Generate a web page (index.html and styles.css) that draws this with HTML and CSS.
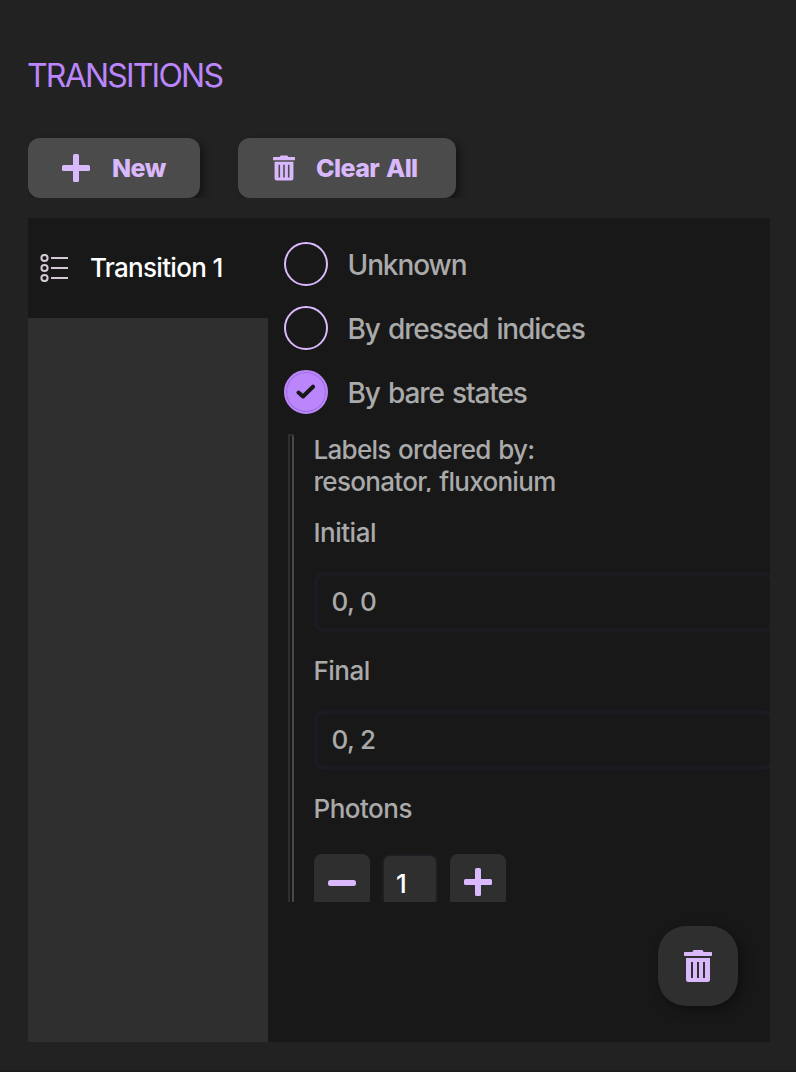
FILE: index.html
```html
<!DOCTYPE html>
<html lang="en">
<head>
<meta charset="utf-8">
<title>Transitions</title>
<link rel="stylesheet" href="styles.css">
</head>
<body>
<svg class="defs" width="0" height="0">
  <symbol id="trash" viewBox="0 0 28 32">
    <path fill-rule="evenodd" d="M0 2.5Q0 2 .7 2H8.5Q9 .2 10 0H18Q19 .2 19.500 2H27.300Q28 2 28 2.700V5.300Q28 6 27.300 6H.7Q0 6 0 5.300ZM2 8H26V29.500Q26 32 23.500 32H4.500Q2 32 2 29.500ZM7 12V28H9V12ZM13 12V28H15V12ZM19 12V28H21V12Z"/>
  </symbol>
  <symbol id="plus" viewBox="0 0 28 28">
    <rect x="0" y="11" width="28" height="6" rx="1.500"/>
    <rect x="11" y="0" width="6" height="28" rx="1.500"/>
  </symbol>
</svg>
<main class="panel">
  <h1 class="title"><span>TRANSITIONS</span></h1>
  <div class="toolbar">
    <button class="btn btn-new"><svg class="icon-plus"><use href="#plus"/></svg><span>New</span></button>
    <button class="btn btn-clear"><svg class="icon-trash-small"><use href="#trash"/></svg><span>Clear All</span></button>
  </div>
  <section class="content">
    <nav class="sidebar">
      <a class="item">
        <svg class="icon-list" viewBox="0 0 28 28">
          <g fill="none" stroke="#d2c8d6" stroke-width="2">
            <circle cx="4.500" cy="4" r="3.100"/><circle cx="4.500" cy="14" r="3.100"/><circle cx="4.500" cy="24" r="3.100"/>
            <path d="M11 4H28M11 14H28M11 24H28"/>
          </g>
        </svg>
        <span>Transition 1</span>
      </a>
    </nav>
    <div class="detail">
      <div class="radios">
        <label class="radio"><i class="dot"></i><span>Unknown</span></label>
        <label class="radio"><i class="dot"></i><span>By dressed indices</span></label>
        <label class="radio"><i class="dot on"><svg class="check" viewBox="0 0 20 16"><path d="M2.500 8.500 7 12.500 17 2.700"/></svg></i><span>By bare states</span></label>
      </div>
      <div class="form">
        <p class="order">Labels ordered by:<br>resonator, fluxonium</p>
        <div class="label l1"><span>Initial</span></div>
        <div class="field"><span>0, 0</span></div>
        <div class="label l2"><span>Final</span></div>
        <div class="field"><span>0, 2</span></div>
        <div class="label l3"><span>Photons</span></div>
        <div class="stepper">
          <button class="step"><svg class="icon-minus"><rect y="2" width="28" height="6" rx="2.500"/></svg></button>
          <div class="count"><span>1</span></div>
          <button class="step"><svg class="icon-plus"><use href="#plus"/></svg></button>
        </div>
      </div>
      <div class="footer">
        <button class="delete"><svg class="icon-trash"><use href="#trash"/></svg></button>
      </div>
    </div>
  </section>
</main>
</body>
</html>
```
FILE: styles.css
```css
* { box-sizing: border-box; }
body {
  margin: 0;
  background: #222;
  font-family: Inter, "Liberation Sans", sans-serif;
  color: #aaa;
}
.defs { display: block; }
svg { display: block; flex: none; fill: #d9b8fb; }
button { font: inherit; border: 0; margin: 0; padding: 0; }
.panel {
  height: 1072px;
  padding: 56px 26px 28px 28px;
  border-bottom: 2px solid #1c1c1c;
}
.title {
  margin: 0 0 0 -1px;
  height: 40px;
  line-height: 40px;
  font-size: 32px;
  font-weight: 400;
  letter-spacing: -1.8px;
  color: #bb86fc;
}
.toolbar {
  display: flex;
  gap: 38px;
  height: 102px;
  padding-top: 42px;
  overflow: hidden;
}
.btn {
  display: flex;
  align-items: center;
  height: 60px;
  border-radius: 12px;
  background: #4b4b4b;
  color: #d9b8fb;
  box-shadow: 4px 4px 8px rgba(0, 0, 0, .4);
  font-size: 25px;
  font-weight: 800;
  letter-spacing: -.6px;
  word-spacing: 2px;
}
.btn-new { width: 172px; padding-left: 34px; gap: 22px; }
.btn-clear { width: 218px; padding-left: 35px; gap: 21px; }
.icon-plus { width: 28px; height: 28px; }
.icon-minus { width: 28px; height: 8px; }
.icon-trash-small { width: 22px; height: 26px; }
.icon-trash { width: 28px; height: 32px; }
.icon-list { width: 28px; height: 28px; }
.content {
  display: flex;
  height: 824px;
  margin-top: 20px;
  background: #181818;
}
.sidebar { width: 240px; background: #2f2f2f; }
.item {
  display: flex;
  align-items: center;
  gap: 22px;
  height: 100px;
  padding-left: 12px;
  background: #181818;
  color: #fff;
  font-size: 26px;
  font-weight: 500;
  letter-spacing: -.7px;
}
.item span { padding-bottom: 2px; }
.detail { width: 502px; overflow: hidden; }
.radios {
  display: flex;
  flex-direction: column;
  gap: 20px;
  height: 216px;
  padding: 24px 0 0 16px;
}
.radio {
  display: flex;
  align-items: center;
  gap: 20px;
  height: 44px;
  font-size: 28px;
  font-weight: 500;
  letter-spacing: -1.1px;
  word-spacing: 1.8px;
}
.radio span { padding-top: 2px; margin-left: -.5px; }
.dot {
  display: flex;
  align-items: center;
  justify-content: center;
  width: 44px;
  height: 44px;
  border: 2px solid #dbb9ff;
  border-radius: 50%;
}
.dot.on {
  border-color: #bb86fc;
  background: #bb86fc;
  box-shadow: inset 0 0 0 1px rgba(100, 65, 145, .35);
}
.check {
  width: 20px;
  height: 16px;
  fill: none;
  stroke: #181818;
  stroke-width: 4;
  stroke-linecap: round;
  stroke-linejoin: round;
}
.form {
  height: 468px;
  margin-left: 20px;
  padding-left: 25.5px;
  background:
    linear-gradient(#2f2f2f, #2f2f2f) 0 0 / 6px 2px no-repeat,
    linear-gradient(#2f2f2f, #2f2f2f) 0 0 / 2px 100% no-repeat,
    linear-gradient(#484848, #484848) 4px 2px / 2px 100% no-repeat;
  overflow: hidden;
  font-size: 26px;
  font-weight: 500;
  letter-spacing: -.7px;
  word-spacing: 1.2px;
}
.order { height: 58px; margin: 0; line-height: 32px; overflow: hidden; }
.label { height: 80px; padding-top: 24px; line-height: 34px; letter-spacing: -.5px; }
.field {
  display: flex;
  align-items: center;
  width: 460px;
  height: 60px;
  margin-left: .5px;
  padding: 0 0 2px 13.5px;
  border: 4px solid #1b1b22;
  border-radius: 10px;
  word-spacing: 0;
}
.field + .label { height: 78px; padding-top: 22px; }
.field + .l3 { height: 84px; }
.stepper { display: flex; gap: 12px; margin-left: .5px; }
.step {
  display: flex;
  align-items: center;
  justify-content: center;
  width: 56px;
  height: 56px;
  border-radius: 8px;
  background: #2f2f2f;
}
.count {
  width: 56px;
  height: 60px;
  padding-left: 12px;
  border: 2px solid #1d1d22;
  border-radius: 8px;
  background: #2f2f2f;
  color: #fff;
  line-height: 56px;
}
.footer {
  display: flex;
  justify-content: flex-end;
  padding: 24px 32px 0 0;
}
.delete {
  display: flex;
  align-items: center;
  justify-content: center;
  width: 80px;
  height: 80px;
  border-radius: 28px;
  background: #2f2f2f;
  box-shadow: 4px 4px 12px rgba(0, 0, 0, .4);
}
```
